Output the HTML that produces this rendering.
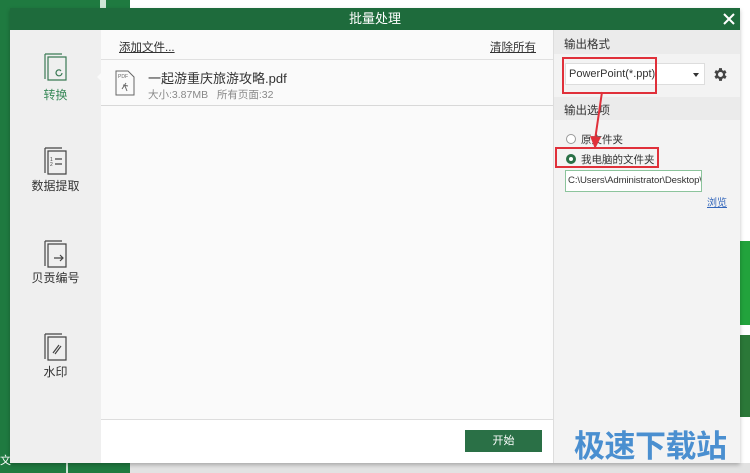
<!DOCTYPE html>
<html><head><meta charset="utf-8">
<style>
*{margin:0;padding:0;box-sizing:border-box}
body{width:750px;height:473px;overflow:hidden;position:relative;background:#fff;font-family:"Liberation Sans","Noto Sans CJK SC",sans-serif;font-size:12px;color:#333}
.a{position:absolute}
</style></head><body>
<div class="a" style="left:0;top:0;width:130px;height:10px;background:#1f7a40"></div>
<div class="a" style="left:100px;top:0;width:6px;height:8px;background:#cfe6d6"></div>
<div class="a" style="left:0;top:0;width:10px;height:473px;background:#1f7a40"></div>
<div class="a" style="left:0;top:463px;width:130px;height:10px;background:#1f7a40"></div>
<div class="a" style="left:66px;top:463px;width:2px;height:10px;background:#cfe6d6"></div>
<div class="a" style="left:130px;top:463px;width:620px;height:10px;background:#e2e2e2"></div>
<div class="a" style="left:740px;top:241px;width:10px;height:84px;background:#22a33c"></div>
<div class="a" style="left:740px;top:335px;width:10px;height:82px;background:#2b7838"></div>
<div class="a" style="left:0;top:452px;font-size:11px;color:#fff">文</div>
<div class="a" style="left:10px;top:8px;width:730px;height:455px;background:#fafafa;box-shadow:0 2px 4px rgba(0,0,0,.25)"></div>
<div class="a" style="left:10px;top:8px;width:730px;height:22px;background:#1e6b3c;color:#fff;text-align:center;line-height:22px;font-size:13px">批量处理</div>
<svg class="a" style="left:723px;top:13px" width="12" height="12"><path d="M1 1L11 11M11 1L1 11" stroke="#fff" stroke-width="2"/></svg>
<div class="a" style="left:10px;top:30px;width:91px;height:433px;background:#efefef"></div>
<div class="a" style="left:92px;top:72px;width:0;height:0;border:5px solid transparent;border-right-color:#fafafa"></div>
<svg class="a" style="left:43px;top:52px" width="28" height="32" fill="none" stroke="#3b7a55" stroke-width="1.2"><path d="M2 2H19M2 2V27M5 5H23V28H5Z"/><path d="M19 21a3 3 0 1 1-2-3l1 1"/></svg>
<div class="a" style="left:10px;top:86px;width:91px;text-align:center;color:#3b8a5a">转换</div>
<svg class="a" style="left:43px;top:146px" width="28" height="32" fill="none" stroke="#444" stroke-width="1.2"><path d="M2 2H19M2 2V27M5 5H23V28H5Z"/><path d="M12 13H19M12 18H19"/><text x="7" y="15" font-size="5" fill="#444" stroke="none">1</text><text x="7" y="20" font-size="5" fill="#444" stroke="none">2</text></svg>
<div class="a" style="left:10px;top:177px;width:91px;text-align:center">数据提取</div>
<svg class="a" style="left:43px;top:239px" width="28" height="32" fill="none" stroke="#444" stroke-width="1.2"><path d="M2 2H19M2 2V27M5 5H23V28H5Z"/><path d="M11 19H20M17 16l3 3-3 3"/></svg>
<div class="a" style="left:10px;top:269px;width:91px;text-align:center">贝贡编号</div>
<svg class="a" style="left:43px;top:332px" width="28" height="32" fill="none" stroke="#444" stroke-width="1.2"><path d="M2 2H19M2 2V27M5 5H23V28H5Z"/><path d="M10 21L16 13M12 22L18 14"/></svg>
<div class="a" style="left:10px;top:363px;width:91px;text-align:center">水印</div>
<div class="a" style="left:119px;top:39px;text-decoration:underline;font-size:11.5px">添加文件...</div>
<div class="a" style="left:490px;top:39px;text-decoration:underline;font-size:11.5px">清除所有</div>
<div class="a" style="left:101px;top:59px;width:452px;height:1px;background:#e0e0e0"></div>
<svg class="a" style="left:115px;top:70px" width="20" height="26" fill="none" stroke="#666"><path d="M1 1H13L19 7V25H1Z"/><text x="3" y="8" font-size="5" fill="#666" stroke="none">PDF</text><path d="M7 19L11 13M8 15L13 16M10 16L12 21"/></svg>
<div class="a" style="left:148px;top:68px;font-size:13px;color:#333">一起游重庆旅游攻略.pdf</div>
<div class="a" style="left:148px;top:87px;font-size:10.5px;color:#888">大小:3.87MB&nbsp;&nbsp; 所有页面:32</div>
<div class="a" style="left:101px;top:105px;width:452px;height:1px;background:#d8d8d8"></div>
<div class="a" style="left:101px;top:419px;width:452px;height:44px;background:#fff;border-top:1px solid #ddd"></div>
<div class="a" style="left:465px;top:430px;width:77px;height:22px;background:#2a7046;color:#fff;text-align:center;line-height:22px;font-size:11px">开始</div>
<div class="a" style="left:553px;top:30px;width:1px;height:433px;background:#ddd"></div>
<div class="a" style="left:554px;top:30px;width:186px;height:433px;background:#f3f3f3"></div>
<div class="a" style="left:554px;top:30px;width:186px;height:24px;background:#ebebeb"></div>
<div class="a" style="left:564px;top:36px;font-size:11.5px">输出格式</div>
<div class="a" style="left:565px;top:63px;width:140px;height:22px;background:#fff;border:1px solid #ddd"></div>
<div class="a" style="left:569px;top:68px;font-size:11px">PowerPoint(*.ppt)</div>
<div class="a" style="left:693px;top:73px;border:3px solid transparent;border-top:4px solid #333"></div>
<svg class="a" style="left:712px;top:66px" width="17" height="17" viewBox="0 0 24 24"><path fill="#444" d="M19.4 13a7.5 7.5 0 0 0 0-2l2.1-1.6-2-3.5-2.5 1a7 7 0 0 0-1.7-1L15 3h-4l-.4 2.9a7 7 0 0 0-1.7 1l-2.5-1-2 3.5L6.6 11a7.5 7.5 0 0 0 0 2l-2.1 1.6 2 3.5 2.5-1a7 7 0 0 0 1.7 1L11 21h4l.4-2.9a7 7 0 0 0 1.7-1l2.5 1 2-3.5zM13 15.5a3.5 3.5 0 1 1 0-7 3.5 3.5 0 0 1 0 7z" transform="translate(-1 0)"/></svg>
<div class="a" style="left:554px;top:97px;width:186px;height:23px;background:#ebebeb"></div>
<div class="a" style="left:564px;top:102px;font-size:11.5px">输出选项</div>
<div class="a" style="left:566px;top:134px;width:10px;height:10px;border:1px solid #999;border-radius:50%;background:#fff"></div>
<div class="a" style="left:581px;top:132px;font-size:10.5px">原文件夹</div>
<div class="a" style="left:566px;top:154px;width:10px;height:10px;border:3px solid #2a7046;border-radius:50%;background:#fff"></div>
<div class="a" style="left:581px;top:152px;font-size:10.5px">我电脑的文件夹</div>
<div class="a" style="left:565px;top:170px;width:137px;height:22px;background:#fff;border:1px solid #8cc49c;overflow:hidden;white-space:nowrap;font-size:9.6px;line-height:20px;padding-left:2px;letter-spacing:-0.1px">C:\Users\Administrator\Desktop\PDF</div>
<div class="a" style="left:707px;top:194px;font-size:10px;color:#3366bb;text-decoration:underline">浏览</div>
<svg class="a" style="left:0;top:0" width="750" height="473"><rect x="563" y="58" width="93" height="35" fill="none" stroke="#e0303a" stroke-width="2"/><rect x="556" y="148" width="102" height="19" fill="none" stroke="#e0303a" stroke-width="2"/><path d="M602 92L595 140" stroke="#e0303a" stroke-width="2"/><path d="M590 136L595 149L601 137Z" fill="#e0303a"/></svg>
<div class="a" style="left:574px;top:421px;font-size:31px;font-weight:bold;color:#4a8fd0;letter-spacing:-0.5px">极速下载站</div>
</body></html>
